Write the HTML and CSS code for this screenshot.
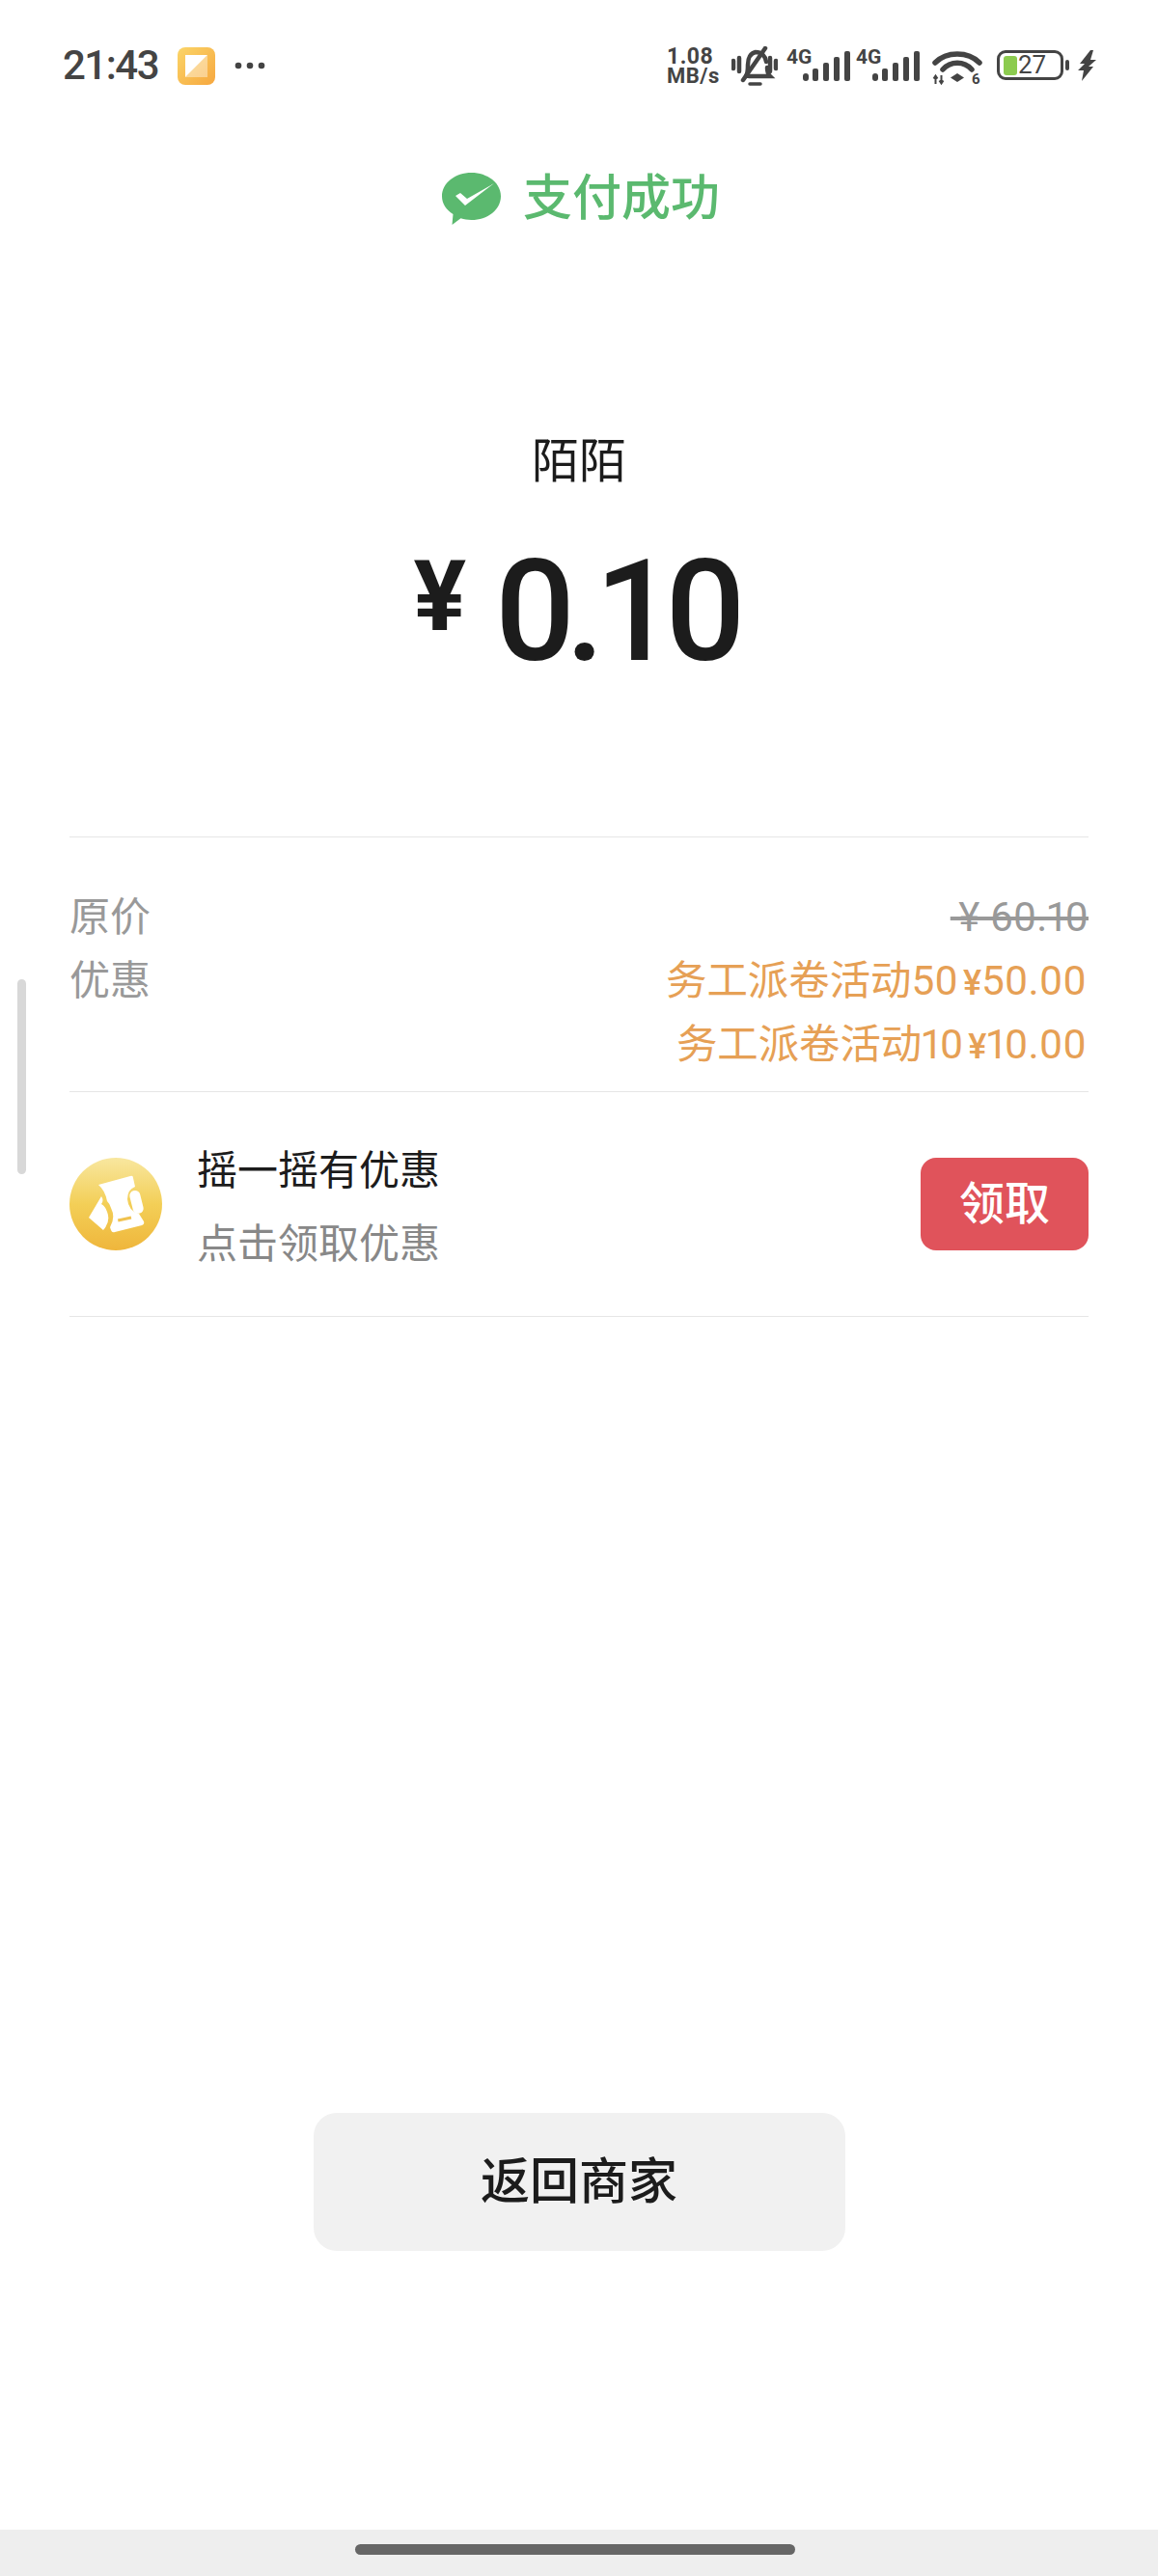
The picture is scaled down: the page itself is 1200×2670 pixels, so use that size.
FILE: index.html
```html
<!DOCTYPE html>
<html lang="zh">
<head>
<meta charset="utf-8">
<title>支付成功</title>
<link rel="stylesheet" href="styles.css">
</head>
<body>
<div class="page">
  <div class="status">
    <div class="status-left">
      <span class="time">21:43</span>
      <svg class="app-icon" viewBox="0 0 39 39"><defs><linearGradient id="ag" x1="0" y1="0" x2="1" y2="1"><stop offset="0" stop-color="#fbd568"/><stop offset="1" stop-color="#f6a73f"/></linearGradient></defs><rect width="39" height="39" rx="8" fill="url(#ag)"/><path d="M8 8H31L8 31Z" fill="#fff"/><path d="M31 8V31H8Z" fill="#fff" opacity=".4"/></svg>
      <svg class="dots" viewBox="0 0 32 8"><circle cx="4" cy="4" r="3.3" fill="#444"/><circle cx="16" cy="4" r="3.3" fill="#444"/><circle cx="28" cy="4" r="3.3" fill="#444"/></svg>
    </div>
    <div class="status-right">
      <div class="speed"><span>1.08</span><span>MB/s</span></div>
      <svg class="bell" viewBox="0 0 48 42" fill="none" stroke="#444" stroke-width="4.500" stroke-linecap="round"><path d="M2 15v8M8 12v14M46 15v8M40 12v14"/><path d="M15 31c2-3 2-6 2-12 0-7 3-12 8-13 6 0 10 4 11 10M37 22c0 4 1 7 3 9H18"/><path d="M35 2 12 35"/><path d="M19 39h11" stroke-width="3.500"/></svg>
      <div class="net"><span class="net-label">4G</span><svg class="bars" viewBox="0 0 49 31"><rect x="0" y="23" width="6" height="8" rx="3" fill="#444"/><rect x="10" y="18" width="6" height="13" rx="2" fill="#444"/><rect x="21" y="12" width="6" height="19" rx="2" fill="#444"/><rect x="32" y="6" width="6" height="25" rx="2" fill="#444"/><rect x="43" y="0" width="6" height="31" rx="2" fill="#444"/></svg></div>
      <div class="net"><span class="net-label">4G</span><svg class="bars" viewBox="0 0 49 31"><rect x="0" y="23" width="6" height="8" rx="3" fill="#444"/><rect x="10" y="18" width="6" height="13" rx="2" fill="#444"/><rect x="21" y="12" width="6" height="19" rx="2" fill="#444"/><rect x="32" y="6" width="6" height="25" rx="2" fill="#444"/><rect x="43" y="0" width="6" height="31" rx="2" fill="#444"/></svg></div>
      <svg class="wifi" viewBox="0 0 52 42" fill="none"><path d="M3 13C15 1 37 1 49 13" stroke="#444" stroke-width="5.500" stroke-linecap="round"/><path d="M11 20C19 11 33 11 41 20" stroke="#444" stroke-width="5.500" stroke-linecap="round"/><path d="M26 24l7 4.500-7 4.500-7-4.500Z" fill="#444"/><path d="M3.500 27v8M1.500 29.500l2-3 2 3M9.500 26v8M7.500 31.500l2 3 2-3" stroke="#444" stroke-width="2"/><text x="41" y="35" class="wifi-six">6</text></svg>
      <div class="battery"><span class="battery-fill"></span><span class="battery-num">27</span></div>
      <span class="battery-nub"></span>
      <svg class="bolt" viewBox="0 0 19 32"><path d="M13 0 2 14h5L0 21h6l-2 11 12-15h-5l8-7h-6l3-10Z" fill="#444"/></svg>
    </div>
  </div>

  <div class="result">
    <svg class="wepay" viewBox="0 0 61 54"><path d="M30.500 0C47 0 61 10.500 61 24.500S47 49 30.500 49c-4 0-7.500-.5-11-1.700L10.500 54l1-11C4.500 38.500 0 32 0 24.500 0 10.500 14 0 30.500 0Z" fill="#5bb96f"/><path d="M14 24l5-3 7 6 28-16-30 23Z" fill="#fff"/></svg>
    <span class="result-text">支付成功</span>
  </div>

  <div class="merchant">陌陌</div>
  <div class="amount"><span class="yen">¥</span><span class="sum">0.10</span></div>

  <div class="details">
    <div class="detail-row">
      <span class="detail-label">原价</span>
      <span class="detail-old">&#8201;¥ 60.10</span>
    </div>
    <div class="detail-row">
      <span class="detail-label">优惠</span>
      <div class="detail-values">
        <div class="discount">务工派卷活动50<span class="mini-yen">¥</span>50.00</div>
        <div class="discount">务工派卷活动10<span class="mini-yen">¥</span>10.00</div>
      </div>
    </div>
  </div>

  <div class="promo">
    <svg class="coin" viewBox="0 0 96 96"><defs><linearGradient id="cg" x1="0" y1="0" x2="0" y2="1"><stop offset="0" stop-color="#f8e79f"/><stop offset=".5" stop-color="#f3cf57"/><stop offset="1" stop-color="#efb63c"/></linearGradient></defs><circle cx="48" cy="48" r="48" fill="url(#cg)"/><path d="M30 28 63 19Q66 18 66 21L68 30Q60 33 60 43 61 55 72 58L77 66Q78 69 75 70L47 77Q44 78 43 75L42 72Q48 62 43 52 42 48 39 45 37 34 30 28Z" fill="#fff"/><path d="M33 40 20 62 35 75Q43 66 39 56 37 50 33 48 36 44 33 40Z" fill="#fff"/><rect x="64" y="34" width="11" height="24" rx="5" transform="rotate(-14 69 46)" fill="#fff"/><rect x="50" y="62" width="14" height="3" fill="#f0c24f" transform="rotate(-12 57 63)"/></svg>
    <div class="promo-text">
      <div class="promo-title">摇一摇有优惠</div>
      <div class="promo-sub">点击领取优惠</div>
    </div>
    <div class="claim">领取</div>
  </div>

  <div class="back">返回商家</div>

  <div class="navbar"><span class="handle"></span></div>
  <span class="scroll-thumb"></span>
</div>
</body>
</html>
```

FILE: styles.css
```css
* { box-sizing: border-box; }
html, body { margin: 0; padding: 0; background: #fff; }
body { font-family: Roboto, "Noto Sans CJK SC", sans-serif; color: #1c1c1c; }
.page { position: relative; width: 1200px; height: 2670px; display: flex; flex-direction: column; overflow: hidden; background: #fff; }

.status { height: 135px; padding: 48px 64px 0 65px; display: flex; justify-content: space-between; align-items: flex-start; color: #444; }
.status-left { display: flex; align-items: center; height: 40px; }
.time { font-size: 42px; line-height: 40px; width: 97px; letter-spacing: -1.500px; font-weight: 500; }
.app-icon { width: 39px; height: 39px; margin-left: 22px; }
.dots { width: 32px; height: 8px; margin-left: 20px; }
.status-right { display: flex; align-items: flex-start; height: 40px; }
.speed { width: 55px; margin-top: 1px; display: flex; flex-direction: column; font-size: 22px; line-height: 20px; font-weight: 700; text-align: left; margin-left: -1px; letter-spacing: .5px; white-space: nowrap; }
.speed span:first-child { font-size: 23px; }
.bell { width: 48px; height: 42px; margin-left: 12px; margin-top: 0; }
.net { position: relative; width: 66px; height: 40px; margin-left: 9px; }
.net + .net { margin-left: 6px; }
.net-label { position: absolute; left: 0; top: 2px; font-size: 21px; line-height: 18px; font-weight: 700; }
.bars { position: absolute; left: 17px; top: 5px; width: 49px; height: 31px; }
.wifi { width: 52px; height: 42px; margin-left: 13px; margin-top: 4px; }
.wifi-six { font: 700 15px Roboto, sans-serif; fill: #444; }
.battery { width: 69px; height: 31px; margin-left: 15px; margin-top: 4px; border: 3px solid #444; border-radius: 9px; display: flex; align-items: center; padding-left: 4px; }
.battery-fill { width: 14px; height: 20px; background: #8ccb4f; border-radius: 3px; }
.battery-num { font-size: 26px; line-height: 25px; margin-left: 1px; font-weight: 400; color: #444; }
.battery-nub { width: 4px; height: 11px; background: #444; border-radius: 2px; margin: 14px 0 0 2px; }
.bolt { width: 19px; height: 32px; margin-left: 9px; margin-top: 4px; }

.result { display: flex; justify-content: center; align-items: center; height: 60px; margin-top: 41px; margin-left: 4px; }
.wepay { width: 61px; height: 54px; }
.result-text { font-size: 51px; line-height: 60px; color: #5bb96f; margin-left: 23px; font-weight: 500; }

.merchant { margin-top: 208px; height: 70px; line-height: 70px; font-size: 49px; text-align: center; }
.amount { height: 160px; margin-top: 41px; padding-right: 9px; display: flex; justify-content: center; align-items: flex-start; }
.yen { font-size: 102px; font-weight: 700; line-height: 120px; margin-top: 3px; margin-right: 30px; }
.sum { font-size: 146px; font-weight: 500; line-height: 160px; letter-spacing: -10px; }

.details { margin: 0 72px; margin-top: 152px; padding: 50px 0 15px; border-top: 1px solid #e6e6e6; border-bottom: 1px solid #e6e6e6; display: flex; flex-direction: column; font-variant-numeric: proportional-nums; }
.detail-row { display: flex; justify-content: space-between; font-size: 42px; line-height: 66px; color: #999; }
.detail-old { font-size: 42px; text-decoration: line-through; white-space: pre; }
.detail-values { text-align: right; }
.discount { color: #e6a055; padding-right: 2px; font-size: 42.4px; line-height: 66px; height: 66px; }
.mini-yen { font-size: 36px; line-height: 1; font-weight: 500; margin-left: 5px; }

.promo { margin: 0 72px; height: 233px; border-bottom: 1px solid #e6e6e6; display: flex; align-items: center; }
.coin { width: 96px; height: 96px; flex: none; }
.promo-text { margin-left: 36px; flex: 1; padding-top: 7px; }
.promo-title { font-size: 42px; line-height: 60px; color: #1c1c1c; }
.promo-sub { font-size: 42px; line-height: 60px; margin-top: 16px; color: #888; }
.claim { width: 174px; height: 96px; border-radius: 16px; background: #e0535b; color: #fff; font-size: 47px; font-weight: 500; line-height: 96px; text-align: center; }

.back { align-self: center; margin-top: auto; margin-bottom: 289px; width: 551px; height: 143px; border-radius: 24px; background: #f1f1f1; font-size: 51px; font-weight: 500; line-height: 143px; text-align: center; }

.navbar { height: 48px; background: #eeeeee; display: flex; justify-content: center; padding-top: 15px; flex: none; }
.handle { width: 456px; height: 11px; border-radius: 6px; background: #666; margin-left: -8px; }
.scroll-thumb { position: absolute; left: 18px; top: 1015px; width: 9px; height: 202px; border-radius: 5px; background: #d8d8d8; }
```
